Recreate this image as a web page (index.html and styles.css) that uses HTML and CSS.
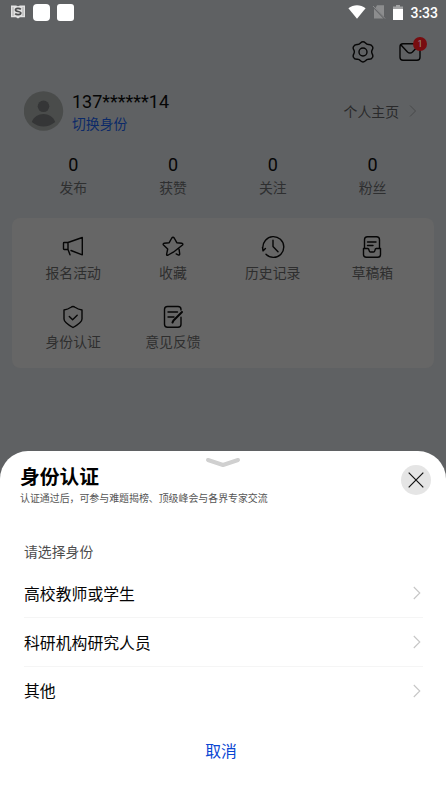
FILE: index.html
```html
<!DOCTYPE html>
<html lang="zh-CN">
<head>
<meta charset="utf-8">
<title>身份认证</title>
<link rel="stylesheet" href="styles.css">
</head>
<body>
<main class="screen">
  <div class="status">
    <svg class="status-app" width="14" height="14" viewBox="0 0 14 14"><path d="M0 .5h5l2 .7L9 .5h5v11.800H9L7 13.500l-2-1.200H0z" fill="#e2e2e2"/><path d="M2 2v9M12 2v9" stroke="#aaa"/><path d="M9.800 4.400C8.500 3 4.500 3 4.500 5c0 2 5.300 1 5.300 3S5.500 10 4.200 8.600" fill="none" stroke="#4d4e4f" stroke-width="1.700"/></svg>
    <span class="status-square"></span>
    <span class="status-square"></span>
    <span class="spacer"></span>
    <svg class="wifi" width="18" height="14" viewBox="0 0 18 14"><path d="M.4 3.200C5.500-.8 12.500-.8 17.600 3.200L9 13.700z" fill="#fff"/></svg>
    <svg class="sim" width="14" height="14" viewBox="0 0 14 14"><path d="M5 .3h7v11.500L3.500 3zM2 3.700l9.300 9.800H2z" fill="#8c8d8e"/><path d="M1 1l12 12.500" stroke="#8c8d8e"/></svg>
    <svg class="battery" width="10" height="15" viewBox="0 0 10 15"><path d="M3 0h4v1.500h3V5H0V1.500h3z" fill="#a2a3a4"/><path d="M0 4h10v11H0z" fill="#fff"/></svg>
    <span class="clock">3:33</span>
  </div>

  <div class="toolbar">
    <svg width="24" height="24" viewBox="0 0 24 24" class="line"><path d="M9.500 3Q12 .7 14.500 3Q15.800 4.600 17.600 4.500Q20.500 4.300 21.600 6.700Q22.200 8.300 21.300 9.600Q20 11.800 21.300 14.200Q22.200 15.800 21.600 17.200Q20.500 19.500 17.600 19.300Q15.800 19.200 14.500 20.800Q12 23 9.500 20.800Q8.200 19.200 6.400 19.300Q3.500 19.500 2.400 17.200Q1.800 15.800 2.700 14.200Q4 11.800 2.700 9.600Q1.800 8.300 2.400 6.700Q3.500 4.300 6.400 4.500Q8.200 4.600 9.500 3Z"/><circle cx="12" cy="12" r="4"/></svg>
    <div class="mail">
      <svg width="24" height="24" viewBox="0 0 24 24" class="line"><rect x="2" y="3.700" width="20" height="16.600" rx="3"/><path d="M3 5l6.500 7q2.500 2.200 5 0L21 5"/></svg>
      <span class="badge">1</span>
    </div>
  </div>

  <section class="profile">
    <svg class="avatar" width="40" height="40" viewBox="0 0 40 40"><circle cx="19.500" cy="20" r="19.700" fill="#4a4c4b"/><circle cx="19.500" cy="15.300" r="5.800" fill="#353637"/><path d="M7.800 31C11.500 20.200 27.500 20.200 31.200 31Q19.500 40 7.800 31z" fill="#353637"/></svg>
    <div class="account">
      <div class="phone">137******14</div>
      <div class="switch">切换身份</div>
    </div>
    <span class="home-link">个人主页</span>
    <svg class="home-arrow" width="8" height="14" viewBox="0 0 8 14"><path d="M1 1.500l5.500 5.500L1 12.500" fill="none" stroke="#48494a"/></svg>
  </section>

  <section class="stats">
    <div class="stat"><b>0</b><span>发布</span></div>
    <div class="stat"><b>0</b><span>获赞</span></div>
    <div class="stat"><b>0</b><span>关注</span></div>
    <div class="stat"><b>0</b><span>粉丝</span></div>
  </section>

  <section class="card">
    <div class="tile"><svg width="24" height="24" viewBox="0 0 24 24" class="line"><path d="M7 7.500L21.300 2.500v17.300L10 15.500M7 7.500H3.200Q2.500 7.500 2.500 8.200v5.600q0 .7.700.7H7zM7 7.500v7l2 5.300"/></svg><span>报名活动</span></div>
    <div class="tile"><svg width="24" height="24" viewBox="0 0 24 24" class="line"><path d="M15.200 18.900l1.900.9q1.600.8 1.600-.9l-.6-4.600M12.300 17.200L7.200 20q-2 1-1.500-1.200L6.700 14 2.500 10q-1-1.300.7-1.700l5-.6 2.600-4.700q1.200-1.600 2.400 0l2.600 4.700 5 .6q1.700.4.700 1.700z"/></svg><span>收藏</span></div>
    <div class="tile"><svg width="24" height="24" viewBox="0 0 24 24" class="line"><path d="M2 15.800Q.8 9.300 4.500 5.200A10.400 10.400 0 1 1 5 19.300M1.500 12.500l.7 3.300 2.200-2.300M12 5.300v6.200l5 5.200"/></svg><span>历史记录</span></div>
    <div class="tile"><svg width="24" height="24" viewBox="0 0 24 24" class="line"><path d="M4.500 13V4.700q0-3 3-3h9q3 0 3 3V13M7.500 7h8.500M7.500 10.500h5.500M4.500 13.500h3.200q1 0 1.200 1l.3 1.300q.3 1.200 1.300 1.200h3q1 0 1.300-1.200l.3-1.300q.2-1 1.200-1h4.200v6q0 2.800-2.800 2.800H6.300q-2.800 0-2.800-2.800v-6z"/></svg><span>草稿箱</span></div>
    <div class="tile"><svg width="24" height="24" viewBox="0 0 24 24" class="line"><path d="M12 1.500q1 0 2 .8Q17 4.500 21 5v9q0 3.500-9 8.500-9-5-9-8.500V5q4-.5 7-2.700 1-.8 2-.8zM8.300 11.500l3.300 3.200 4.600-4.400"/></svg><span>身份认证</span></div>
    <div class="tile"><svg width="24" height="24" viewBox="0 0 24 24" class="line"><path d="M20 5V4.500q0-3-3-3H6.500q-3 0-3 3v14.700q0 3 3 3H17q3 0 3-3v-7M7 7h9.500M7 12h6"/><path d="M11.500 17.500l1-2 8.500-8.500" stroke-width="2"/></svg><span>意见反馈</span></div>
  </section>

  <section class="sheet">
    <svg class="handle" width="36" height="12" viewBox="0 0 36 12"><path d="M3 3l15 5 15-5" fill="none" stroke="#d0d0d0" stroke-width="4" stroke-linecap="round" stroke-linejoin="round"/></svg>
    <header class="sheet-head">
      <div>
        <h1>身份认证</h1>
        <p>认证通过后，可参与难题揭榜、顶级峰会与各界专家交流</p>
      </div>
      <button class="close" aria-label="关闭"><svg width="16" height="16" viewBox="0 0 16 16"><path d="M.7.700l14.600 14.600M15.300.700L.7 15.300" stroke="#111" stroke-width="1.200"/></svg></button>
    </header>
    <div class="prompt">请选择身份</div>
    <div class="options">
      <div class="option"><span>高校教师或学生</span><svg width="8" height="14" viewBox="0 0 8 14"><path d="M.8 1l6 6-6 6" fill="none" stroke="#c6c6c6" stroke-width="1.100"/></svg></div>
      <div class="option"><span>科研机构研究人员</span><svg width="8" height="14" viewBox="0 0 8 14"><path d="M.8 1l6 6-6 6" fill="none" stroke="#c6c6c6" stroke-width="1.100"/></svg></div>
      <div class="option"><span>其他</span><svg width="8" height="14" viewBox="0 0 8 14"><path d="M.8 1l6 6-6 6" fill="none" stroke="#c6c6c6" stroke-width="1.100"/></svg></div>
    </div>
    <div class="cancel">取消</div>
  </section>
</main>
</body>
</html>
```
FILE: styles.css
```css
* { box-sizing: border-box; }
body { margin: 0; font-family: Roboto, "Noto Sans CJK SC", sans-serif; }
svg { display: block; flex: none; }
.screen {
  position: relative;
  width: 446px;
  height: 794px;
  overflow: hidden;
  background: #5f6163;
}
.line { fill: none; stroke: #060606; stroke-width: 1.4; stroke-linecap: round; stroke-linejoin: round; }
.status { display: flex; align-items: center; height: 24px; padding: 0 8px 0 11px; }
.status-square { width: 17px; height: 17px; margin-left: 8px; border-radius: 4px; background: #fff; }
.status-square + .status-square { margin-left: 7px; border-radius: 3px; }
.spacer { flex: 1; }
.sim { margin-left: 6px; }
.battery { margin-left: 7px; }
.clock { margin-left: 7px; padding-top: 1px; font-size: 14px; line-height: 24px; font-weight: 500; color: #fff; }
.toolbar { display: flex; justify-content: flex-end; gap: 23px; height: 66px; padding: 16px 24px 0 0; }
.mail { position: relative; height: 24px; }
.badge {
  position: absolute;
  top: -3px;
  right: -5px;
  width: 14px;
  height: 14px;
  border-radius: 50%;
  background: #780d10;
  color: #9c8b8b;
  font-size: 9px;
  line-height: 14px;
  text-align: center;
}
.profile { display: flex; align-items: center; height: 42px; padding: 0 29px 0 24px; }
.account { flex: 1; margin-left: 8px; }
.phone { padding-top: 3px; font-size: 18px; line-height: 23px; color: #060606; }
.switch { font-size: 13.85px; line-height: 22px; color: #0c2a68; }
.home-link { padding-top: 1px; font-size: 13.85px; line-height: 20px; color: #29292a; }
.home-arrow { margin-left: 10px; }
.stats { display: grid; grid-template-columns: repeat(4, 1fr); padding: 21px 23.5px 0; height: 86px; text-align: center; }
.stat b { display: block; font-size: 18px; font-weight: 400; line-height: 23px; color: #060606; }
.stat span { display: block; margin-top: 2px; font-size: 13.85px; line-height: 21px; color: #2e2f30; }
.card {
  display: grid;
  grid-template-columns: repeat(4, 1fr);
  grid-auto-rows: 69.5px;
  width: 422px;
  height: 150px;
  margin-left: 12px;
  padding: 17px 11.7px 0 11.3px;
  border-radius: 8px;
  background: #666;
}
.tile { display: flex; flex-direction: column; align-items: center; font-size: 13.85px; line-height: 20px; color: #2e2e2e; }
.tile span { margin-top: 3.6px; }
.sheet {
  position: absolute;
  inset: 450.5px 0 0;
  border-radius: 28px 28px 0 0;
  background: #fff;
}
.handle { position: absolute; left: 205px; top: 6px; }
.sheet-head { display: flex; justify-content: space-between; height: 91px; padding: 14.5px 15px 0 20px; }
h1 { margin: 1px 0 0; font-size: 19.8px; line-height: 24px; font-weight: 700; color: #000; }
p { margin: 1px 0 0; font-size: 9.92px; line-height: 16px; color: #555; }
.close {
  display: flex;
  align-items: center;
  justify-content: center;
  width: 30px;
  height: 30px;
  padding: 0;
  border: 0;
  border-radius: 50%;
  background: #e5e5e5;
}
.prompt { padding-left: 24px; font-size: 13.85px; line-height: 20px; color: #4d4d4d; }
.options { padding: 7.5px 23px 0 24px; }
.option { display: flex; align-items: center; justify-content: space-between; height: 48.8px; padding-right: 2px; font-size: 15.85px; color: #050505; border-bottom: 1px solid #f5f5f5; }
.option span { padding-top: 1px; }
.option:last-child { border-bottom: 0; }
.option:last-child span { padding-top: 0; }
.cancel { margin-top: 25px; padding-right: 4px; font-size: 15.85px; line-height: 24px; text-align: center; color: #0a46d2; }
```
